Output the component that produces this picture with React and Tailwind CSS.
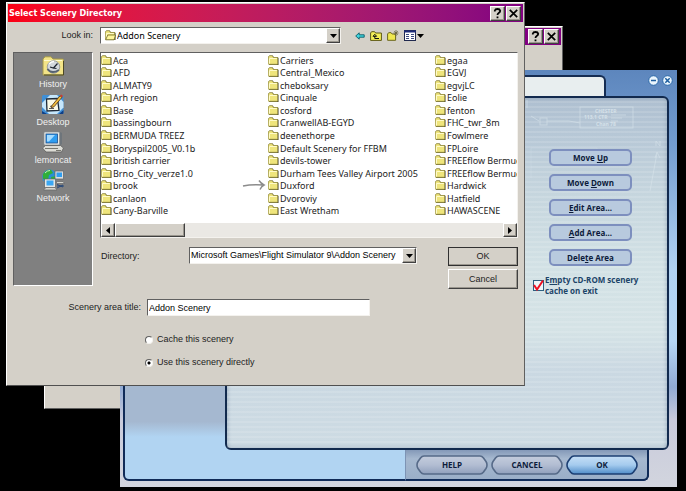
import { useId } from "react";

const folders = [
  "Aca", "AFD", "ALMATY9", "Arh region", "Base", "bassingbourn", "BERMUDA TREEZ",
  "Boryspil2005_V0.1b", "british carrier", "Brno_City_verze1.0", "brook", "canlaon",
  "Cany-Barville", "Carriers", "Central_Mexico", "cheboksary", "Cinquale", "cosford",
  "CranwellAB-EGYD", "deenethorpe", "Default Scenery for FFBM", "devils-tower",
  "Durham Tees Valley Airport 2005", "Duxford", "Dvoroviy", "East Wretham", "egaa",
  "EGVJ", "egvjLC", "Eolie", "fenton", "FHC_twr_8m", "Fowlmere", "FPLoire",
  "FREEflow Bermuda", "FREEflow Bermuda 2", "Hardwick", "Hatfield", "HAWASCENE",
];

const raised =
  "border border-t-white border-l-white border-r-[#404040] border-b-[#404040] bg-[#d4d0c8] shadow-[inset_-1px_-1px_0_#9a968e]";
const sunken =
  "border border-t-[#606060] border-l-[#606060] border-r-[#f4f2ee] border-b-[#f4f2ee] bg-white";

function Folder({ open }) {
  return (
    <svg viewBox="0 0 11 11" className="h-[11px] w-[11px] shrink-0" aria-hidden="true">
      <path d="M.5 2.500V1.500L1.500.600h3.200l1 1.400H9.500l1 1V10H1z" fill="#3f3c1e" />
      <path d="M.5 9.200V1.800l1-1h2.800l1 1.700h4.200v6.700z" fill="#efe57c" stroke="#a89f4c" strokeWidth=".7" />
      <path d="M1.500 3.500h7.300M1.500 3.500v5" stroke="#fffbc8" fill="none" />
      {open && <path d="M.6 9.800 2.800 5h7.800L9 9.800z" fill="#fff79a" stroke="#6f6824" strokeWidth=".8" />}
    </svg>
  );
}

function Down() {
  return (
    <svg viewBox="0 0 7 4" className="h-1 w-[7px]" aria-hidden="true">
      <path d="M0 0h7L3.500 4z" fill="#000" />
    </svg>
  );
}

function TitleButtons() {
  return (
    <div className="flex gap-px">
      <button aria-label="Help" className={`grid h-[15px] w-[15px] place-items-center ${raised}`}>
        <svg viewBox="0 0 9 11" className="h-[11px] w-[9px]" fill="none" stroke="#000" strokeWidth="1.800">
          <path d="M1.800 3.400V2.600Q2.200 1 4.500 1t2.700 1.700Q7.200 4 5.700 4.900 4.500 5.600 4.500 7M4.500 8.400v1.800" />
        </svg>
      </button>
      <button aria-label="Close" className={`grid h-[15px] w-[15px] place-items-center ${raised}`}>
        <svg viewBox="0 0 9 9" className="h-[9px] w-[9px]" stroke="#000" strokeWidth="1.700">
          <path d="m.8.8 7.400 7.400M8.200.8.800 8.200" />
        </svg>
      </button>
    </div>
  );
}

function Combo({ id, value, icon, className }) {
  return (
    <div className={`relative flex h-[17px] items-center ${sunken} ${className}`}>
      {icon}
      <select
        id={id}
        className="h-full min-w-0 flex-1 appearance-none bg-transparent pl-px text-black outline-none"
      >
        <option>{value}</option>
      </select>
      <span className={`pointer-events-none absolute top-0 right-0 grid h-[15px] w-[14px] place-items-center ${raised}`}>
        <Down />
      </span>
    </div>
  );
}

function HistoryIcon() {
  return (
    <svg viewBox="0 0 24 20" className="h-5 w-6">
      <path d="M2 3 4 .8h6L12 3h9.500q1 0 1 1v15H2z" fill="#f3e488" stroke="#a3974a" />
      <path d="M3 19h19.500V5" stroke="#4d4824" fill="none" />
      <path d="M3 4.500h18" stroke="#fffbd0" />
      <circle cx="12.500" cy="11" r="6.300" fill="#d3d8dc" stroke="#8b8f94" strokeWidth=".8" />
      <path d="M6.500 13q4 5.500 11.500 1" stroke="#566270" fill="none" strokeWidth="2" />
      <path d="M8 8q2-2.500 5-2.500" stroke="#fff" fill="none" strokeWidth="1.300" />
      <path d="m9 11 3.500 1 4-4.500M12.500 12l3 .5" stroke="#1d2430" fill="none" strokeWidth="1.200" />
    </svg>
  );
}

function DesktopIcon() {
  return (
    <svg viewBox="0 0 24 21" className="h-[21px] w-6">
      <rect x="1" y="1" width="21.500" height="19" rx="1.500" fill="#3f8fd6" />
      <path d="M1 9 9 1h7l6.500 7v5.500L16 20H8l-7-7z" fill="#c5e6fb" />
      <path d="M1 17v2q0 1 1 1h4zM22.500 16v3q0 1-1 1H18z" fill="#103f86" />
      <path d="m5.500 5 11-.5 1.500 12-12 .5z" fill="#fbfae6" stroke="#1e2a38" strokeWidth="1.300" />
      <path d="M8 14.500h5M9 12.500l3-1" stroke="#5b5b5b" />
      <path d="M11 11.500 19 1.800l2 1.500-8 9.500-2.800 1z" fill="#f3bf3f" stroke="#4b2d10" strokeWidth=".8" />
      <path d="m19 1.800 1.200-1.300 2 1.500-1.200 1.300z" fill="#d43b2a" />
    </svg>
  );
}

function ComputerIcon() {
  return (
    <svg viewBox="0 0 24 22" className="h-[22px] w-6">
      <path d="M5 1.500 18 .5l3 1.500v11l-3 2.500L5 13.500z" fill="#6e757b" />
      <rect x="3" y="1" width="15.500" height="13" rx="1" fill="#e8ebe8" stroke="#8b9092" strokeWidth=".7" />
      <rect x="5" y="3" width="11.500" height="9" fill="#2f9df0" stroke="#1c4b8a" strokeWidth=".8" />
      <path d="M6 4h8L8 10.500H6z" fill="#a6dcff" />
      <path d="m1.500 17 3-2.500h15l3 2.500-2 4H5z" fill="#dcdcd6" stroke="#5c5c5a" strokeWidth=".8" />
      <path d="M4 17.500h13M15 19.500h5" stroke="#77776f" />
    </svg>
  );
}

function NetworkIcon() {
  return (
    <svg viewBox="0 0 24 22" className="h-[22px] w-6">
      <circle cx="8.500" cy="7.800" r="7.300" fill="#2a8fd4" />
      <path d="M2 5q3-4.500 8-4.300L12 4 8 6l-1 5-5-1zM10 8l5-1v4l-4 3z" fill="#2faf38" />
      <path d="M4 4q2-2.500 5-2.500" stroke="#c9f3c0" fill="none" />
      <rect x="14" y="2" width="8.500" height="8" fill="#dcdedd" stroke="#5e6266" strokeWidth=".7" />
      <rect x="15.500" y="3.500" width="5.500" height="4.500" fill="#2f9df0" />
      <path d="M15 12.500h7l1.500 2H16z" fill="#d5d6d0" stroke="#666" strokeWidth=".7" />
      <path d="M16 15.500 22 18M16 19l6-3M16 17h7" stroke="#2a4b7a" />
      <rect x="3.500" y="10" width="11" height="8.500" fill="#e5e7e5" stroke="#5e6266" strokeWidth=".7" />
      <rect x="5.500" y="11.500" width="7" height="5" fill="#39a7f4" />
      <path d="M2.500 21 5 18.500h9l2 2.500z" fill="#d5d6d0" stroke="#666" strokeWidth=".7" />
    </svg>
  );
}

const places = [
  ["History", HistoryIcon],
  ["Desktop", DesktopIcon],
  ["lemoncat", ComputerIcon],
  ["Network", NetworkIcon],
];

function Toolbar() {
  return (
    <div className="ml-[14px] flex items-center gap-[5px]">
      <button aria-label="Back">
        <svg viewBox="0 0 10 8" className="h-2 w-[10px]">
          <path d="M.7 4 4.200.8v2h5v2.400h-5v2z" fill="#3fd6e0" stroke="#0b5a66" strokeWidth=".9" />
        </svg>
      </button>
      <button aria-label="Up one level">
        <svg viewBox="0 0 12 10" className="h-[10px] w-3">
          <path d="M.6 2 1.600.7h3L5.600 2h5.800v7.400H.6z" fill="#f5ef58" stroke="#5c5814" />
          <path d="M3 5.300 4.800 3.300l1.800 2zM4.800 5v2.500H9" fill="none" stroke="#111" />
        </svg>
      </button>
      <button aria-label="New folder">
        <svg viewBox="0 0 12 11" className="h-[11px] w-3">
          <path d="M.6 4 1.600 2.700h2.500l1 1.300h3.500v6.300h-8z" fill="#f0e850" stroke="#6b661c" />
          <path d="M9 0v6M6.500 3h5M7.200 1.200l3.600 3.600M10.800 1.200 7.200 4.800" stroke="#6a6640" strokeWidth=".8" />
        </svg>
      </button>
      <button aria-label="View menu" className="flex items-center gap-px">
        <svg viewBox="0 0 12 11" className="h-[11px] w-3">
          <rect x=".5" y=".5" width="11" height="10" fill="#fff" stroke="#20284e" />
          <path d="M0 1.500h12" stroke="#1d2a78" strokeWidth="2" />
          <path d="M2 4.500h3M2 6.500h3M2 8.500h3M7 4.500h3M7 6.500h3M7 8.500h3" stroke="#3c4a80" />
        </svg>
        <Down />
      </button>
    </div>
  );
}

function Dialog() {
  const id = useId();
  return (
    <section className="absolute top-[2px] left-[6px] w-[519px] border border-t-white border-l-white border-r-[#606060] border-b-[#505050] bg-[#d4d0c8] p-px pb-[17px] font-['Liberation_Sans',sans-serif] text-[9px] leading-[11px] text-[#222]">
      <header className="flex h-[18px] items-center justify-between bg-linear-to-r from-[#fb0012] to-[#820082] pr-[2px] pl-px">
        <h1 className="font-['DejaVu_Sans_Condensed','DejaVu_Sans',sans-serif] font-bold text-white">
          Select Scenery Directory
        </h1>
        <TitleButtons />
      </header>

      <div className="px-[5px] pt-[5px]">
        <div className="flex items-center">
          <label htmlFor={`${id}look`} className="w-[80px] text-right">Look in:</label>
          <Combo
            id={`${id}look`}
            value="Addon Scenery"
            icon={<span className="pl-[4px]"><Folder open /></span>}
            className="ml-[7px] w-[241px] font-['Noto_Sans',sans-serif]"
          />
          <Toolbar />
        </div>

        <div className="mt-2 flex items-start gap-[7px]">
          <nav className="flex h-[234px] w-[80px] flex-col gap-[3px] border border-t-[#606060] border-l-[#606060] border-r-white border-b-white bg-[#808080] pt-[2px]">
            {places.map(([name, Icon]) => (
              <button key={name} className="flex h-[35px] flex-col items-center justify-between text-[#f0f0f0]">
                <span className="grid h-[22px] place-items-center"><Icon /></span>
                {name}
              </button>
            ))}
          </nav>

          <div className="min-w-0 flex-1">
            <div className={`flex h-[186px] flex-col ${sunken}`}>
              <ul className="grid flex-1 auto-cols-[167px] grid-flow-col grid-rows-[repeat(13,minmax(0,1fr))] overflow-hidden pt-px pb-[6px] font-['Noto_Sans',sans-serif]">
                {folders.map((name) => (
                  <li key={name} className="relative flex items-center gap-px whitespace-nowrap">
                    <Folder />
                    {name}
                    {name === "Duxford" && (
                      <svg viewBox="0 0 24 12" className="absolute top-0 -left-[26px] h-3 w-6" fill="none" stroke="#8c8c8c" strokeWidth="1.500">
                        <path d="M1 7Q10 5 22 6M17 1.500q2 3 5 4.500-3 1.500-4 4.500" />
                      </svg>
                    )}
                  </li>
                ))}
              </ul>
              <div className="flex h-[14px] bg-[#eae8e4]">
                <button aria-label="Scroll left" className={`grid w-[14px] place-items-center ${raised}`}>
                  <svg viewBox="0 0 4 7" className="h-[7px] w-1"><path d="M4 0v7L0 3.500z" /></svg>
                </button>
                <div className={`w-[70px] ${raised}`} />
                <button aria-label="Scroll right" className={`ml-auto grid w-[14px] place-items-center ${raised}`}>
                  <svg viewBox="0 0 4 7" className="h-[7px] w-1"><path d="M0 0v7l4-3.500z" /></svg>
                </button>
              </div>
            </div>

            <div className="mt-[9px] flex items-start">
              <label htmlFor={`${id}dir`} className="w-[89px] pt-1 pl-px">Directory:</label>
              <Combo id={`${id}dir`} value="Microsoft Games\Flight Simulator 9\Addon Scenery" className="w-[228px]" />
              <div className="ml-auto flex w-[70px] flex-col gap-[3px]">
                <button className={`h-[19px] outline outline-[#303030] -outline-offset-1 ${raised}`}>OK</button>
                <button className={`h-[20px] ${raised}`}>Cancel</button>
              </div>
            </div>
          </div>
        </div>

        <div className="mt-[10px] flex items-center">
          <label htmlFor={`${id}title`} className="w-[134px] pr-[6px] text-right">Scenery area title:</label>
          <input
            id={`${id}title`}
            defaultValue="Addon Scenery"
            className={`h-[17px] w-[223px] px-px text-black outline-none ${sunken}`}
          />
        </div>

        <div className="mt-[18px] ml-[132px] flex flex-col gap-[12px]">
          {["Cache this scenery", "Use this scenery directly"].map((text, i) => (
            <label key={text} className="flex items-center gap-[4px]">
              <input
                type="radio"
                name={`${id}mode`}
                defaultChecked={i === 1}
                className="h-[8px] w-[8px] appearance-none rounded-full border border-t-[#606060] border-l-[#606060] border-r-[#f4f2ee] border-b-[#f4f2ee] bg-white checked:bg-[radial-gradient(circle,#000_1px,#fff_2px)]"
              />
              {text}
            </label>
          ))}
        </div>
      </div>
    </section>
  );
}

function AreaButton({ before, accel, after }) {
  return (
    <button className="h-[17px] rounded-[5px] border-2 border-[#7d8fbe] bg-[#b8cade] text-center leading-[11px] text-[#0c1a3a]">
      {before}
      <u>{accel}</u>
      {after}
    </button>
  );
}

function PillButton({ children, primary }) {
  const id = useId();
  return (
    <button className="relative grid h-[20px] w-[72px] place-items-center text-[#0d1c3c]">
      <svg viewBox="0 0 72 20" className="absolute inset-0 h-full w-full" aria-hidden="true">
        <defs>
          <linearGradient id={id} x1="0" y1="0" x2="0" y2="1">
            <stop offset="0" stopColor={primary ? "#c6dff6" : "#c4cddd"} />
            <stop offset=".5" stopColor={primary ? "#a5cbee" : "#b2bdd2"} />
            <stop offset="1" stopColor={primary ? "#4f8cc8" : "#8f9fbc"} />
          </linearGradient>
        </defs>
        <path
          d="M8 1h56q2 0 3.500 2l2.500 3.500Q71 8 71 10t-1 3.500L67.500 17q-1.500 2-3.500 2H8q-2 0-3.500-2L2 13.500Q1 12 1 10t1-3.500L4.500 3Q6 1 8 1z"
          fill={`url(#${id})`}
          stroke={primary ? "#1c3f73" : "#566a88"}
          strokeWidth="1.600"
        />
      </svg>
      <span className="relative">{children}</span>
    </button>
  );
}

function ChartMarks() {
  return (
    <svg viewBox="0 0 144 120" className="absolute top-0 right-0 h-[120px] w-36" fill="none" stroke="#dce8ee" aria-hidden="true">
      <g opacity=".5">
        <rect x="57" y="9" width="53" height="21" />
        <path d="M4 2v8M8 18l8 5M24 23h22l11 2M88 17h15M88 20h11M88 23h7" />
        <rect x="17" y="20" width="7" height="7" />
        <path d="m127 93 7-38M132 60l2-6 3 6M133 48v-5l4 5v-5" />
      </g>
      <path d="M8 80V50h66v14M8 69h28" opacity=".2" />
      <g fill="#e2edf2" stroke="none" opacity=".7" className="text-[5px]">
        <text x="72" y="15">CHESTER</text>
        <text x="61" y="21">113.1 CTR</text>
        <text x="73" y="28">Chan 78</text>
      </g>
    </svg>
  );
}

function LibraryWindow() {
  const id = useId();
  return (
    <section className="absolute top-[70px] left-[120px] grid h-[417px] w-[557px] grid-cols-[102px_1fr_20px] grid-rows-[26px_1fr_31px] bg-[linear-gradient(#5d86bd,#739dd0_18%,#b0d2f3_48%,#b5d6f5_65%,#91aad3_76%,#c9cbdc_84%,#d2d5de)] pr-[8px] pb-[6px] pl-[3px] font-['Open_Sans',sans-serif] text-[8px] font-bold">
      <div className="col-span-2 col-start-1 row-span-2 row-start-2 rounded-b-[6px] border-2 border-t-0 border-[#102b58] bg-[linear-gradient(#a5b8d0_85%,#b1d4f2_89%)]" />
      <div className="col-span-2 col-start-2 row-start-1 flex items-end justify-between">
        <div className="h-[21px] flex-1 rounded-tr-[6px] border-2 border-b-0 border-[#152c52] bg-[#e8eeef]" />
        <div className="-mr-[4px] flex w-[67px] justify-end gap-[3px] self-start pt-[5px]">
          {["M3 5.500h5", "m3.300 3.300 4.400 4.400M7.700 3.300 3.300 7.700"].map((d, i) => (
            <button key={d} aria-label={i ? "Close" : "Minimize"}>
              <svg viewBox="0 0 11 11" className="h-[11px] w-[11px]">
                <circle cx="5.500" cy="5.500" r="4.800" fill="#eaf5fd" stroke="#2b68a8" />
                <path d={d} stroke="#1f5f9f" strokeWidth="1.500" />
              </svg>
            </button>
          ))}
        </div>
      </div>

      <div className="relative col-span-2 col-start-2 row-start-2 flex justify-end rounded-tr-[6px] rounded-b-[6px] border-2 border-[#122a4e] bg-[linear-gradient(#aebfd0,#b6c7d6_10%,#c6d6de_28%,#d2e1e5_48%,#d5e3e6_66%,#cad8e2_78%,#cddbe3)] pt-[51px] pr-[22px] shadow-[inset_0_0_4px_#8da0b4]">
        <div className="absolute inset-0 bg-[repeating-linear-gradient(transparent_0_3px,rgba(255,255,255,0.12)_3px_5px)]" />
        <ChartMarks />
        <div className="relative flex w-[112px] flex-col">
          <div className="ml-4 flex w-[83px] flex-col gap-2">
            <AreaButton before="Move " accel="U" after="p" />
            <AreaButton before="Move " accel="D" after="own" />
            <AreaButton before="" accel="E" after="dit Area..." />
            <AreaButton before="" accel="A" after="dd Area..." />
            <AreaButton before="Dele" accel="t" after="e Area" />
          </div>
          <div className="mt-[8px] flex items-center gap-px">
            <span className="relative h-[11px] w-[11px] shrink-0">
              <input
                id={`${id}cache`}
                type="checkbox"
                defaultChecked
                className="peer block h-[11px] w-[11px] appearance-none border border-[#2d5f80] bg-[#eef6f8]"
              />
              <svg viewBox="0 0 11 11" className="pointer-events-none absolute inset-0 hidden h-[11px] w-[11px] overflow-visible peer-checked:block">
                <path d="m1 5 3 4.500L10 .5" fill="none" stroke="#ee1122" strokeWidth="2" />
              </svg>
            </span>
            <label htmlFor={`${id}cache`} className="leading-[11px] text-[#1c4468]">
              E<u>m</u>pty CD-ROM scenery cache on exit
            </label>
          </div>
        </div>
      </div>

      <div className="relative col-start-2 row-start-3 ml-auto flex w-[244px] items-center gap-[3px] rounded-br-[6px] border-r-2 border-b-2 border-l border-[#102b58] border-l-[#7d93b4] bg-[linear-gradient(#8499b8,#a6b8cf_30%,#9aaec8)] pl-[10px]">
        <PillButton>HELP</PillButton>
        <PillButton>CANCEL</PillButton>
        <PillButton primary>OK</PillButton>
      </div>
    </section>
  );
}

export default function App() {
  return (
    <main className="relative h-screen min-h-[491px] overflow-hidden bg-black">
      <section className="absolute top-[26px] left-[44px] h-[383px] w-[519px] border border-t-white border-l-white border-r-[#606060] border-b-[#606060] bg-[#d4d0c8] p-px">
        <header className="flex h-[17px] items-center justify-end bg-[#820082] pr-[2px]">
          <TitleButtons />
        </header>
      </section>
      <LibraryWindow />
      <Dialog />
    </main>
  );
}
